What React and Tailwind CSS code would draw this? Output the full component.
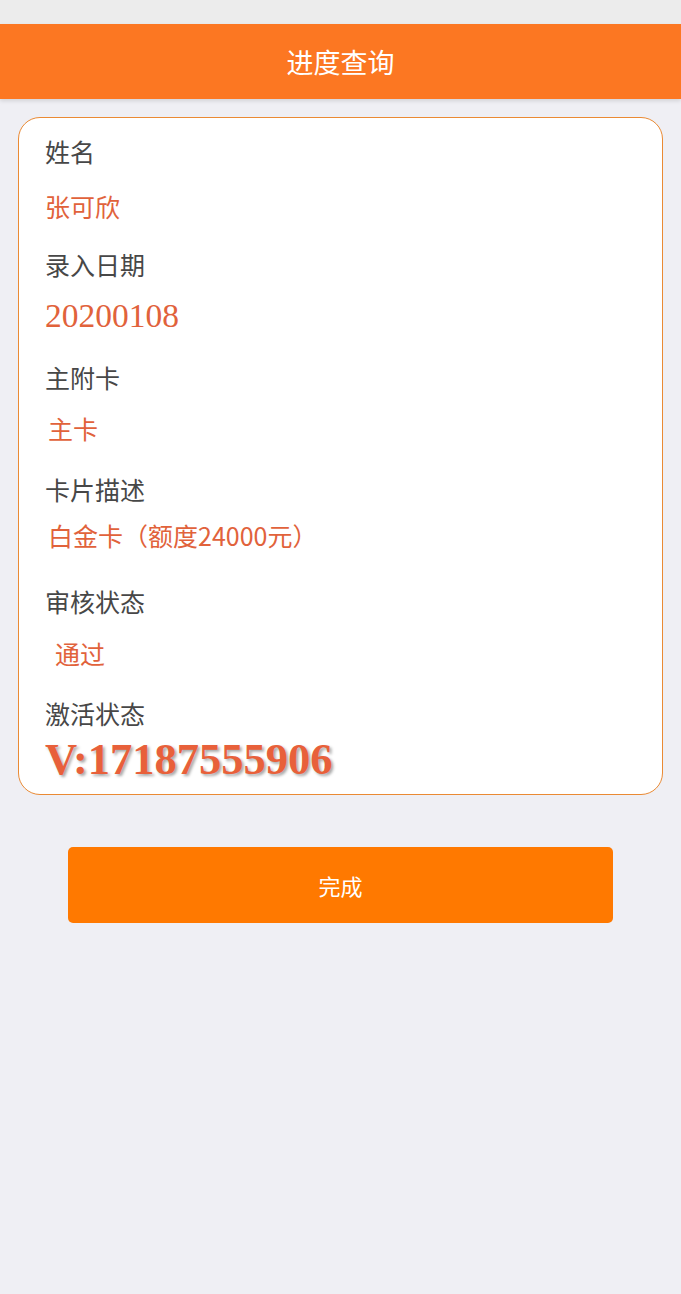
export default function App() {
  const cjk = { fontFamily: '"Noto Sans CJK SC", "Noto Sans", sans-serif' };
  const items = [
    { label: "姓名", value: "张可欣", h: "h-[113px]", mt: "mt-[15px]", vx: "pl-0", kind: "cjk" },
    { label: "录入日期", value: "20200108", h: "h-[113px]", mt: "mt-[12px]", vx: "pl-0", kind: "num" },
    { label: "主附卡", value: "主卡", h: "h-[112px]", mt: "mt-[11px]", vx: "pl-[3px]", kind: "cjk" },
    { label: "卡片描述", value: "白金卡（额度24000元）", h: "h-[112px]", mt: "mt-[6px]", vx: "pl-[3px]", kind: "cjk" },
    { label: "审核状态", value: "通过", h: "h-[112px]", mt: "mt-[12px]", vx: "pl-[10px]", kind: "cjk" },
  ];
  return (
    <div className="min-h-[1294px] bg-[#efeff4] w-full" style={cjk}>
      <div className="h-[24px] bg-[#ececec]" />
      <div className="h-[75px] bg-[#fc7722] flex items-center justify-center shadow-[0_2px_4px_rgba(0,0,0,0.12)]">
        <span className="text-white text-[27px] leading-none">进度查询</span>
      </div>
      <div className="mx-[18px] mt-[18px] bg-white border-[1.5px] border-[#ea8a34] rounded-[22px] pt-[13px] pl-[26px] pb-[15px]">
        {items.map((it) => (
          <div key={it.label} className={`${it.h} flex flex-col`}>
            <div className="h-[40px] leading-[40px] text-[25px] text-[#474747]">{it.label}</div>
            <div className={`${it.mt} ${it.vx} h-[40px] leading-[40px] text-[#e1623b]`}>
              {it.kind === "num" ? (
                <span className="text-[33.5px]" style={{ fontFamily: '"Liberation Serif", serif' }}>{it.value}</span>
              ) : (
                <span className="text-[25px]">{it.value}</span>
              )}
            </div>
          </div>
        ))}
        <div className="flex flex-col">
          <div className="h-[40px] leading-[40px] text-[25px] text-[#474747]">激活状态</div>
          <div className="mt-[6px] h-[40px] leading-[40px]">
            <span
              className="text-[44.5px] font-bold text-[#e8603a] [text-shadow:2px_2px_3px_rgba(0,0,0,0.35)]"
              style={{ fontFamily: '"Liberation Serif", serif' }}
            >
              V:17187555906
            </span>
          </div>
        </div>
      </div>
      <div className="px-[68px] mt-[52px]">
        <div className="h-[76px] bg-[#ff7900] rounded-[5px] flex items-center justify-center">
          <span className="text-white text-[22px] leading-none">完成</span>
        </div>
      </div>
    </div>
  );
}
